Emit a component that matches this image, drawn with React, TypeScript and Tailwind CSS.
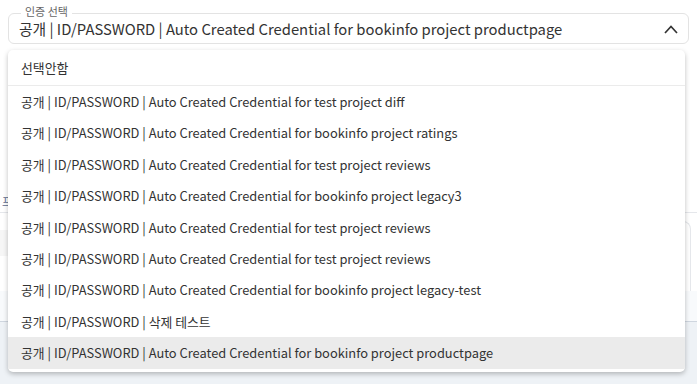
import React from "react";

const options = [
  "공개 | ID/PASSWORD | Auto Created Credential for test project diff",
  "공개 | ID/PASSWORD | Auto Created Credential for bookinfo project ratings",
  "공개 | ID/PASSWORD | Auto Created Credential for test project reviews",
  "공개 | ID/PASSWORD | Auto Created Credential for bookinfo project legacy3",
  "공개 | ID/PASSWORD | Auto Created Credential for test project reviews",
  "공개 | ID/PASSWORD | Auto Created Credential for test project reviews",
  "공개 | ID/PASSWORD | Auto Created Credential for bookinfo project legacy-test",
  "공개 | ID/PASSWORD | 삭제 테스트",
  "공개 | ID/PASSWORD | Auto Created Credential for bookinfo project productpage",
];

export default function App() {
  const selected = options.length - 1;

  return (
    <div className="relative w-[697px] h-[384px] overflow-hidden bg-white text-[#333] font-['Noto_Sans_CJK_KR','Noto_Sans',sans-serif]">
      {/* page behind the open menu */}
      <div className="flex flex-col h-full">
        <div className="px-2 pt-[13px]">
          <div className="relative flex items-center h-[31px] border border-[#e3e3e3] rounded-[6px] pl-[10px] pr-[8px]">
            <span className="absolute left-[12px] -top-[9px] bg-white px-[4px] text-[11px] leading-[13px] text-[#666]">
              인증 선택
            </span>
            <span className="flex-1 text-[14.8px] leading-[18px] whitespace-nowrap">{options[selected]}</span>
            <svg width="16" height="12" viewBox="0 0 16 12" className="mr-[1px]">
              <polyline points="2,10 8,3.5 14,10" fill="none" stroke="#333" strokeWidth="1.7" />
            </svg>
          </div>
        </div>

        <div className="mt-[150px] flex flex-col flex-1">
          <div className="h-[19px] border-b border-[#e5e7eb] pl-[2px]">
            <div className="w-[9px] overflow-hidden whitespace-nowrap text-[11px] leading-[14px] text-[#5b6b8f]">
              프로젝트
            </div>
          </div>
          <div className="flex flex-1">
            <div className="w-[8px] flex flex-col">
              <div className="h-[17px]" />
              <div className="h-[26px] bg-[#f6f6f6]" />
            </div>
            <div className="flex-1 mt-[8px] mr-[6px] border-t border-r border-[#e5e7eb] rounded-tr-[8px]" />
          </div>
          <div className="h-[31px] bg-[#f8fafc] border-b border-[#cfd6df]" />
          <div className="h-[62px] bg-[#eef2f6]" />
        </div>
      </div>

      {/* open menu */}
      <div className="absolute left-2 top-[50px] w-[677px] h-[322px] bg-white rounded-[5px] shadow-[0_2px_5px_rgba(0,0,0,0.25)] overflow-hidden">
        <div className="h-[36px] flex items-center pl-[13px] border-b border-[#ebebeb] text-[12.9px]">선택안함</div>
        {options.map((o, i) => (
          <div
            key={i}
            className={
              "h-[31.4px] flex items-center pl-[13px] text-[12.86px] whitespace-nowrap " +
              (i === selected ? "bg-[#ebebeb]" : "")
            }
          >
            {o}
          </div>
        ))}
      </div>
    </div>
  );
}
